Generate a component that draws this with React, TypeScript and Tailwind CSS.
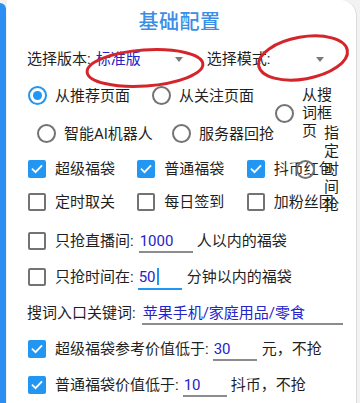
import React from 'react';

const font = { fontFamily: "Roboto, 'Noto Sans CJK SC', 'Noto Sans', sans-serif" };

function Check({ on }: { on?: boolean }) {
  if (on) {
    return (
      <span className="w-[18px] h-[18px] rounded-[2px] bg-[#2196f3] flex items-center justify-center flex-none">
        <svg width="14" height="14" viewBox="0 0 24 24" fill="none" stroke="white" strokeWidth="3.2" strokeLinecap="square">
          <path d="M4.5 12.5l5 5L19.5 7" />
        </svg>
      </span>
    );
  }
  return <span className="w-[18px] h-[18px] rounded-[2px] border-2 border-[#737373] flex-none" />;
}

function Radio({ on }: { on?: boolean }) {
  return (
    <span
      className={`w-[19px] h-[19px] rounded-full border-2 flex items-center justify-center flex-none ${
        on ? 'border-[#2196f3]' : 'border-[#737373]'
      }`}
    >
      {on && <span className="w-[9px] h-[9px] rounded-full bg-[#2196f3]" />}
    </span>
  );
}

function Spinner({ value, width }: { value?: string; width: string }) {
  return (
    <div className={`flex items-center justify-between ${width}`}>
      <span className="text-[#2424c8]">{value}</span>
      <span className="w-0 h-0 border-l-[4px] border-r-[4px] border-t-[5px] border-l-transparent border-r-transparent border-t-[#7a7a7a] mr-[4px]" />
    </div>
  );
}

function Field({ value, width, focused }: { value: string; width: string; focused?: boolean }) {
  return (
    <div className={`relative h-[36px] flex items-center ${width}`}>
      <span className="text-[#2424c8] pl-[1px] flex items-center">
        {value}
        {focused && <span className="w-[2px] h-[17px] bg-[#2196f3] ml-[1px]" />}
      </span>
      <span
        className={`absolute left-0 right-0 ${
          focused ? 'bottom-[5px] h-[2px] bg-[#2196f3]' : 'bottom-[6px] h-[1.5px] bg-[#8c8c8c]'
        }`}
      />
    </div>
  );
}

function CheckItem({ on, label }: { on?: boolean; label: string }) {
  return (
    <div className="w-[110px] flex items-center gap-[9px] whitespace-nowrap">
      <Check on={on} />
      <span>{label}</span>
    </div>
  );
}

export default function App() {
  return (
    <div className="relative w-[360px] h-[403px] overflow-hidden bg-[#f2f2f2] flex text-[15px] text-[#1f1f1f]" style={font}>
      <div className="w-[6px] mt-[3px] bg-[#2a8ff0] rounded-tr-[6px] flex-none" />
      <div className="w-[350px] ml-[1px] bg-white rounded-tr-[16px] border-r border-[#dcdcdc] pl-[20px] flex flex-col">
        <div className="h-[46px] flex items-center justify-center pr-[24px] pt-[2px]">
          <span className="text-[20px] font-medium text-[#3a8ee6] tracking-[0.5px]">基础配置</span>
        </div>

        <div className="h-[36px] flex items-center">
          <span>选择版本:</span>
          <div className="ml-[5px]">
            <Spinner value="标准版" width="w-[91px]" />
          </div>
          <span className="ml-[20px]">选择模式:</span>
          <Spinner width="w-[58px]" />
        </div>

        <div className="h-[38px] flex items-start pt-[10px] leading-[18px]">
          <div className="flex items-center ml-[1px]">
            <Radio on />
            <span className="ml-[8px] whitespace-nowrap">从推荐页面</span>
          </div>
          <div className="flex items-center ml-[22px]">
            <Radio />
            <span className="ml-[8px] whitespace-nowrap">从关注页面</span>
          </div>
          <div className="flex items-center ml-[21px]">
            <Radio />
            <span className="ml-[8px] w-[31px] break-all">从搜词框页</span>
          </div>
        </div>

        <div className="h-[38px] flex items-start pt-[10px] leading-[18px] relative z-10">
          <div className="flex items-center ml-[10px]">
            <Radio />
            <span className="ml-[8px] whitespace-nowrap">智能AI机器人</span>
          </div>
          <div className="flex items-center ml-[19px]">
            <Radio />
            <span className="ml-[8px] whitespace-nowrap">服务器回抢</span>
          </div>
          <div className="flex items-center ml-[22px]">
            <Radio />
            <span className="ml-[9px] w-[16px] break-all">指定时间抢</span>
          </div>
        </div>

        <div className="h-[36px] flex items-center ml-[1px]">
          <CheckItem on label="超级福袋" />
          <CheckItem on label="普通福袋" />
          <CheckItem on label="抖币红包" />
        </div>
        <div className="h-[36px] flex items-center ml-[1px]">
          <CheckItem label="定时取关" />
          <CheckItem label="每日签到" />
          <CheckItem label="加粉丝团" />
        </div>

        <div className="h-[38px] mt-[4px] flex items-center ml-[1px] whitespace-nowrap">
          <Check />
          <span className="ml-[9px]">只抢直播间:</span>
          <div className="ml-[5px]">
            <Field value="1000" width="w-[54px]" />
          </div>
          <span className="ml-[4px]">人以内的福袋</span>
        </div>
        <div className="h-[36px] flex items-center ml-[1px] whitespace-nowrap">
          <Check />
          <span className="ml-[9px]">只抢时间在:</span>
          <div className="ml-[4px]">
            <Field value="50" width="w-[44px]" focused />
          </div>
          <span className="ml-[5px]">分钟以内的福袋</span>
        </div>
        <div className="h-[36px] flex items-center whitespace-nowrap">
          <span>搜词入口关键词:</span>
          <div className="ml-[6px]">
            <Field value="苹果手机/家庭用品/零食" width="w-[201px]" />
          </div>
        </div>
        <div className="h-[36px] flex items-center ml-[1px] whitespace-nowrap">
          <Check on />
          <span className="ml-[9px]">超级福袋参考价值低于:</span>
          <div className="ml-[4px]">
            <Field value="30" width="w-[44px]" />
          </div>
          <span className="ml-[5px]">元，不抢</span>
        </div>
        <div className="h-[36px] flex items-center ml-[1px] whitespace-nowrap">
          <Check on />
          <span className="ml-[9px]">普通福袋价值低于:</span>
          <div className="ml-[4px]">
            <Field value="10" width="w-[44px]" />
          </div>
          <span className="ml-[4px]">抖币，不抢</span>
        </div>
      </div>

      <svg className="absolute inset-0 pointer-events-none z-20" width="360" height="403" viewBox="0 0 360 403" fill="none">
        <ellipse cx="145" cy="68" rx="58" ry="18" transform="rotate(-4 145 68)" stroke="#d4252b" strokeWidth="3" />
        <ellipse cx="303" cy="58" rx="45" ry="21" transform="rotate(-10 303 58)" stroke="#d4252b" strokeWidth="3" />
      </svg>
    </div>
  );
}
